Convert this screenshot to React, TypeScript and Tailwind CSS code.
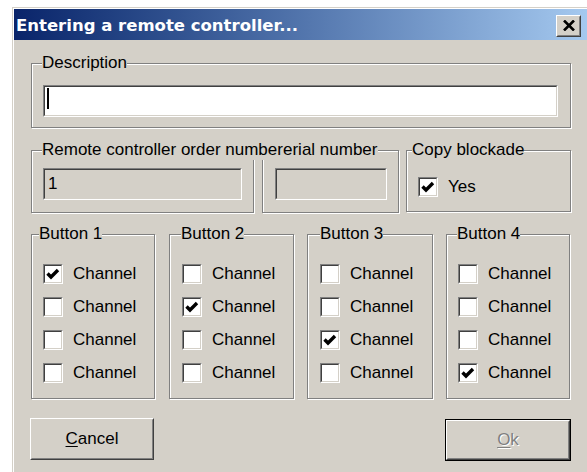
import React from 'react';

type Kids = { children?: React.ReactNode };

// classic 2px sunken edge used by text fields and check boxes
function Sunken({ className = '', inner = '', children }: Kids & { className?: string; inner?: string }) {
  return (
    <div className={`border border-t-[#808080] border-l-[#808080] border-r-white border-b-white ${className}`}>
      <div className={`h-full border border-t-[#404040] border-l-[#404040] border-r-[#d4d0c8] border-b-[#d4d0c8] ${inner}`}>
        {children}
      </div>
    </div>
  );
}

function CheckBox({ checked = false }: { checked?: boolean }) {
  return (
    <Sunken className="h-[20px] w-[20px] shrink-0" inner="bg-white">
      {checked && (
        <svg width="16" height="16" viewBox="0 0 16 16" className="block">
          <path d="M2.5 7.5 L6 11 L13 4" fill="none" stroke="#000" strokeWidth="3.4" />
        </svg>
      )}
    </Sunken>
  );
}

function Group({
  label,
  className = '',
  legend = '',
  children,
}: Kids & { label: string; className?: string; legend?: string }) {
  return (
    <fieldset
      className={`min-w-0 border border-[#808080] shadow-[inset_1px_1px_0_#fff,1px_1px_0_#fff] ${className}`}
    >
      <legend className={`whitespace-nowrap bg-[#d4d0c8] p-0 leading-[20px] ${legend}`}>{label}</legend>
      {children}
    </fieldset>
  );
}

function ChannelRow({ checked }: { checked?: boolean }) {
  return (
    <div className="flex h-[20px] items-center gap-[10px]">
      <CheckBox checked={checked} />
      <span className="leading-[20px]">Channel</span>
    </div>
  );
}

const BUTTONS = [
  { label: 'Button 1', checked: 0, box: 'w-[124px] pl-[11px]', legend: '-ml-[4px]' },
  { label: 'Button 2', checked: 1, box: 'w-[125px] pl-[12px] ml-[14px]', legend: '-ml-[1px]' },
  { label: 'Button 3', checked: 2, box: 'w-[126px] pl-[12px] ml-[13px]', legend: 'ml-0' },
  { label: 'Button 4', checked: 3, box: 'w-[124px] pl-[11px] ml-[13px]', legend: '-ml-[1px]' },
];

export default function App() {
  return (
    <div className="h-[472px] w-[587px] overflow-hidden bg-white">
      <div className="ml-[12px] mt-[7px] h-[480px] w-[600px] border-l border-t border-[#d4d0c8]">
        <div className="h-full border-l border-t border-white bg-[#d4d0c8] font-['Liberation_Sans',Arial,sans-serif] text-[17px] text-black">
          {/* title bar */}
          <div className="flex h-[31px] w-[576px] items-center bg-gradient-to-r from-[#0a246a] to-[#a6caf0]">
            <span className="ml-[2px] mt-[4px] font-['DejaVu_Sans',sans-serif] text-[16.5px] font-bold text-white">
              Entering a remote controller...
            </span>
            <button className="ml-auto mr-[9px] mt-[2px] h-[22px] w-[25px] border border-t-white border-l-white border-r-[#404040] border-b-[#404040] bg-[#d4d0c8]">
              <div className="flex h-full items-center justify-center border border-t-[#d4d0c8] border-l-[#d4d0c8] border-r-[#808080] border-b-[#808080]">
                <svg width="12" height="11" viewBox="0 0 12 11">
                  <path d="M1 0.5 L11 10.5 M11 0.5 L1 10.5" stroke="#000" strokeWidth="2.6" />
                </svg>
              </div>
            </button>
          </div>

          <div className="flex flex-col pl-[17px]">
            <Group label="Description" className="mt-[13px] w-[540px] pl-[11px] pr-[12px] pt-[12px] pb-[10px]" legend="-ml-[1px]">
              <Sunken className="h-[32px]" inner="bg-white pl-[2px] pt-px">
                <div className="h-[21px] w-[2px] bg-black" />
              </Sunken>
            </Group>

            <div className="mt-[12px] flex items-start">
              {/* the long caption runs over the neighbouring box, as in the original form */}
              <Group
                label="Remote controller order number"
                className="w-[223px] pl-[11px] pr-[11px] pt-[8px] pb-[12px]"
                legend="relative z-10 -ml-[1px]"
              >
                <Sunken className="h-[32px]" inner="flex items-center pl-[3px]">
                  <span className="leading-[20px]">1</span>
                </Sunken>
              </Group>
              <Group label="erial number" className="ml-[8px] w-[137px] pl-[12px] pr-[11px] pt-[8px] pb-[12px]" legend="ml-[8px]">
                <Sunken className="h-[32px]" />
              </Group>
              <Group label="Copy blockade" className="ml-[7px] w-[165px] pl-[11px] pt-[17px] pb-[14px]" legend="-ml-[6px]">
                <div className="flex h-[20px] items-center gap-[10px]">
                  <CheckBox checked />
                  <span className="leading-[20px]">Yes</span>
                </div>
              </Group>
            </div>

            <div className="mt-[11px] flex items-start">
              {BUTTONS.map((b) => (
                <Group key={b.label} label={b.label} className={`${b.box} pt-[20px] pb-[15px]`} legend={b.legend}>
                  <div className="flex flex-col gap-[13px]">
                    {[0, 1, 2, 3].map((i) => (
                      <ChannelRow key={i} checked={i === b.checked} />
                    ))}
                  </div>
                </Group>
              ))}
            </div>

            <div className="mt-[19px] flex w-[541px] -ml-px items-start justify-between">
              <button className="h-[42px] w-[124px] border border-t-white border-l-white border-r-[#404040] border-b-[#404040] bg-[#d4d0c8]">
                <div className="flex h-full items-center justify-center border border-t-[#d4d0c8] border-l-[#d4d0c8] border-r-[#808080] border-b-[#808080]">
                  <span>
                    <span className="underline underline-offset-2">C</span>ancel
                  </span>
                </div>
              </button>
              <button className="mt-px h-[42px] w-[126px] border border-black bg-[#d4d0c8]">
                <div className="h-full border border-t-white border-l-white border-r-[#404040] border-b-[#404040]">
                  <div className="flex h-full items-center justify-center border border-t-[#d4d0c8] border-l-[#d4d0c8] border-r-[#808080] border-b-[#808080] text-[#808080] [text-shadow:1px_1px_0_#fff]">
                    <span>
                      <span className="underline underline-offset-2">O</span>k
                    </span>
                  </div>
                </div>
              </button>
            </div>
          </div>
        </div>
      </div>
    </div>
  );
}
